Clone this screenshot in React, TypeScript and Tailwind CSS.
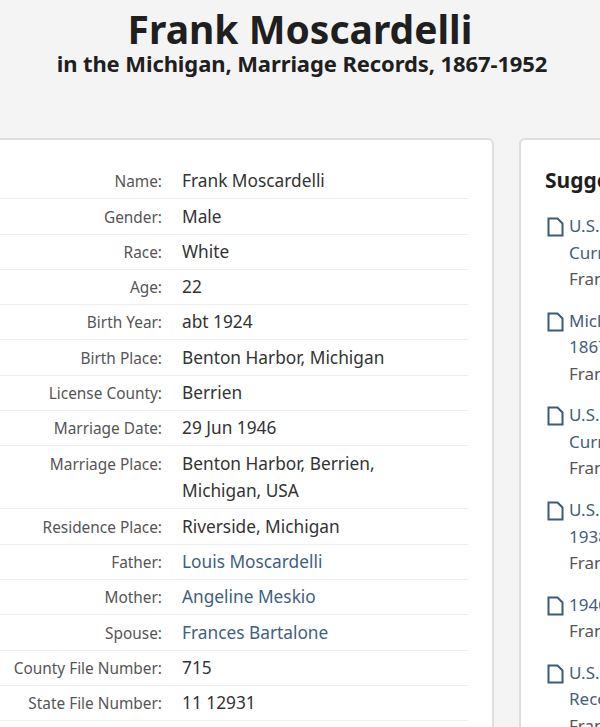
const rows: [string, string, boolean?][] = [
  ["Name:", "Frank Moscardelli"],
  ["Gender:", "Male"],
  ["Race:", "White"],
  ["Age:", "22"],
  ["Birth Year:", "abt 1924"],
  ["Birth Place:", "Benton Harbor, Michigan"],
  ["License County:", "Berrien"],
  ["Marriage Date:", "29 Jun 1946"],
  ["Marriage Place:", "Benton Harbor, Berrien, Michigan, USA"],
  ["Residence Place:", "Riverside, Michigan"],
  ["Father:", "Louis Moscardelli", true],
  ["Mother:", "Angeline Meskio", true],
  ["Spouse:", "Frances Bartalone", true],
  ["County File Number:", "715"],
  ["State File Number:", "11 12931"],
];

const suggestions: [string, string?][] = [
  ["U.S., Social Security", "Current Records"],
  ["Michigan, Marriage", "1867-1952"],
  ["U.S., Public Records", "Current Index"],
  ["U.S., World War II", "1938-1946"],
  ["1940 Census"],
  ["U.S., Veterans", "Records"],
];

function DocIcon() {
  return (
    <svg width="17" height="20" viewBox="0 0 17 20" className="mt-[4px] ml-[1.5px] mr-[5.5px] shrink-0" fill="none" stroke="#3d5a78" strokeWidth="2">
      <path d="M1.5 1.5h9l5 5v12h-14z" />
    </svg>
  );
}

export default function App() {
  return (
    <div className="h-[727px] w-[600px] overflow-hidden bg-[#f4f4f4] font-['Noto_Sans',sans-serif] text-[#222]">
      <div className="h-[138px] text-center">
        <h1 className="pt-[8px] text-[39px] leading-[41px] font-bold text-[#1f1f1f]">Frank Moscardelli</h1>
        <h2 className="pl-[4px] text-[22px] leading-[28px] font-bold text-[#1f1f1f] tracking-[-0.1px]">in the Michigan, Marriage Records, 1867-1952</h2>
      </div>
      <div className="flex w-[800px] ml-[-41px] gap-[25px] items-start">
        <div className="w-[535px] h-[640px] shrink-0 rounded-[6px] border-2 border-[#dedede] bg-white pt-[24px] pl-[23px]">
          <div className="w-[484px]">
            {rows.map(([label, value, link]) => (
              <div key={label} className="flex border-b border-[#eeeeee] py-[3.3px] text-[17.3px] leading-[27.7px]">
                <div className="w-[178px] shrink-0 text-right text-[15.4px] leading-[24px] mt-[3px] text-[#555]">{label}</div>
                <div className={`ml-[20px] w-[230px] ${link ? "text-[#3f5f7f]" : "text-[#333]"}`}>{value}</div>
              </div>
            ))}
          </div>
        </div>
        <div className="w-[300px] h-[640px] shrink-0 rounded-[6px] border-2 border-[#dedede] bg-white pl-[24px] pt-[25px]">
          <div className="text-[21px] leading-[30px] font-bold text-[#1f1f1f] whitespace-nowrap">Suggested Records</div>
          <div className="mt-[18px] flex flex-col gap-[15.2px]">
            {suggestions.map(([a, b]) => (
              <div key={a} className="flex text-[17px] leading-[26.5px] whitespace-nowrap">
                <DocIcon />
                <div>
                  <div className="text-[#3f5f7f]">{a}</div>
                  {b && <div className="text-[#3f5f7f]">{b}</div>}
                  <div className="text-[#555]">Frank Moscardelli</div>
                </div>
              </div>
            ))}
          </div>
        </div>
      </div>
    </div>
  );
}
